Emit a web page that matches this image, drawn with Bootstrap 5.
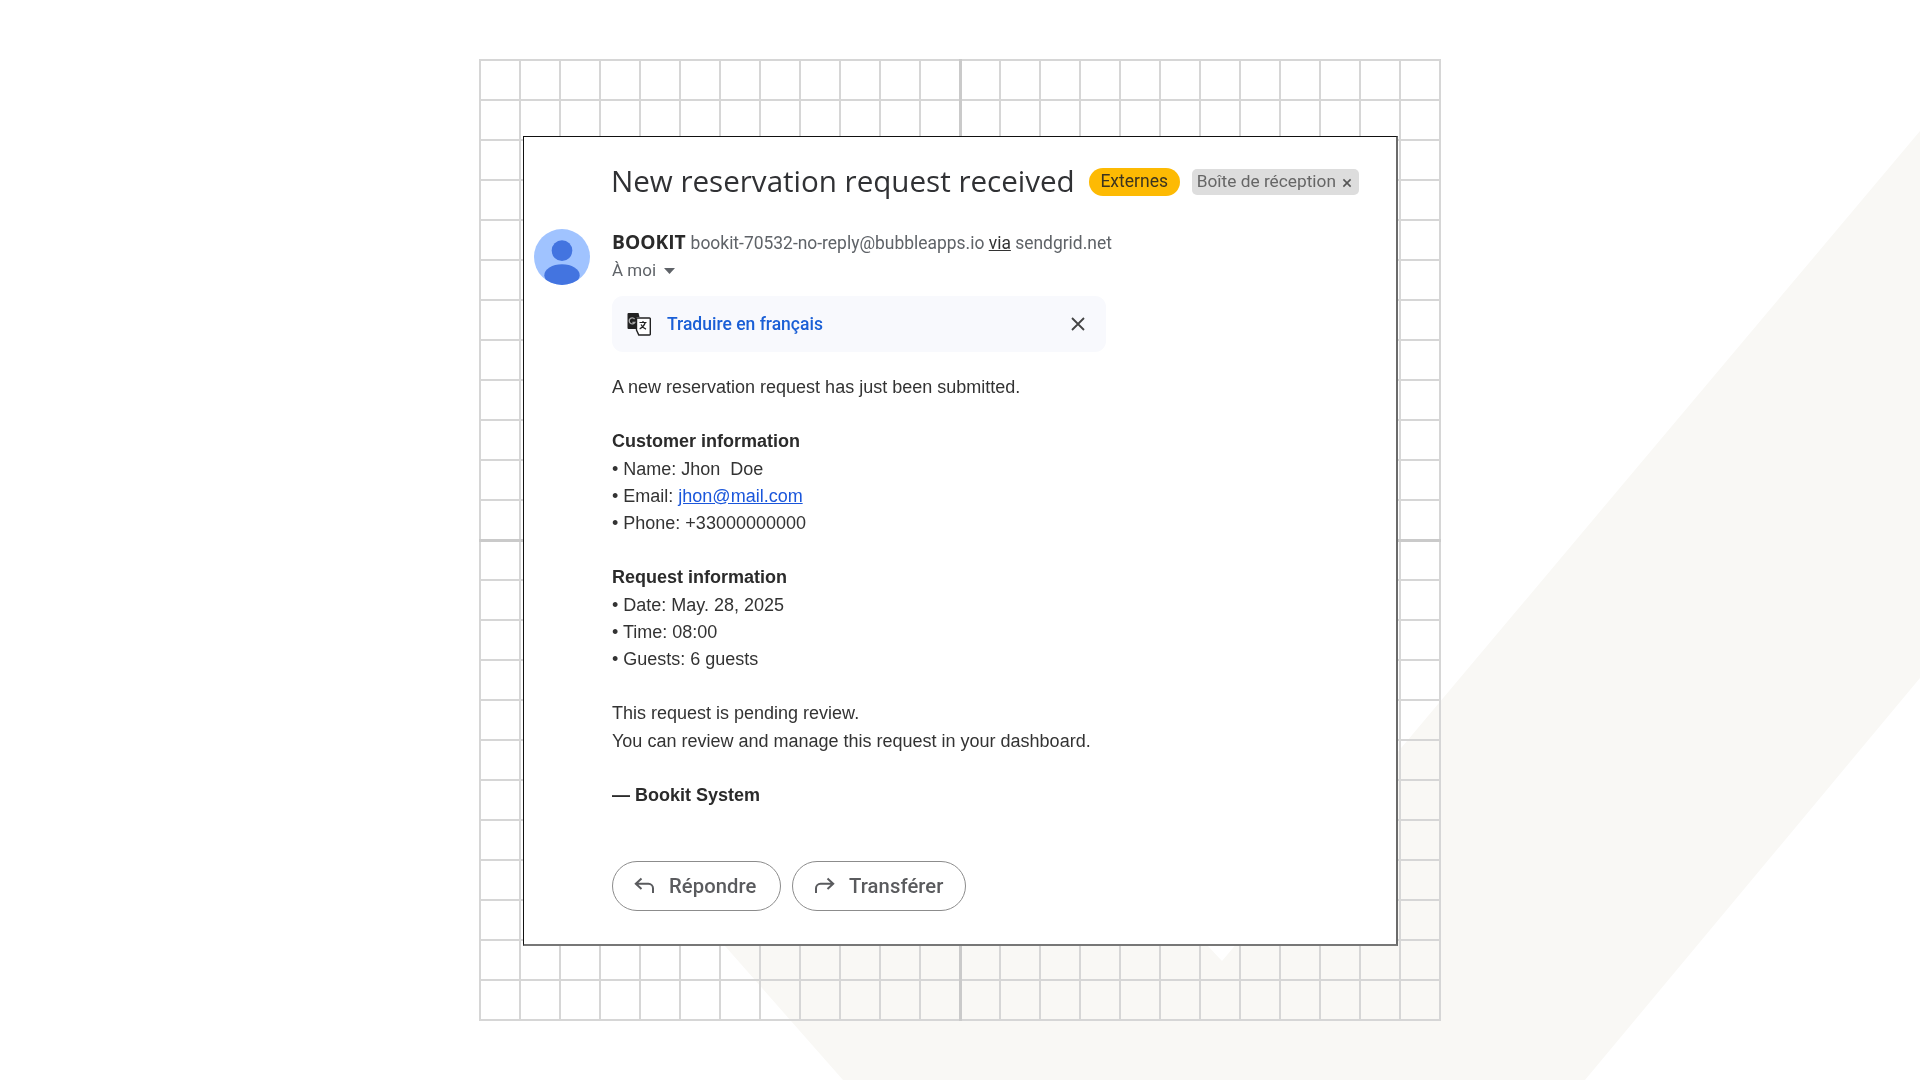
<!DOCTYPE html>
<html lang="fr"><head><meta charset="utf-8"><title>Reservation</title>
<link href="https://cdn.jsdelivr.net/npm/bootstrap@5.3.0/dist/css/bootstrap.min.css" rel="stylesheet">
<style>
html,body{height:100%}
body{background:#fff;font-family:Roboto,"Liberation Sans",sans-serif;color:#222;overflow:hidden;position:relative}
.bgband{position:absolute;left:0;top:0;width:1920px;height:1080px}
.stage{position:relative;width:962px;height:962px;margin:59px 0 0 479px;padding:77px 0 0 44px;
 background-image:
 linear-gradient(#cacaca,#cacaca),linear-gradient(#cacaca,#cacaca),
 linear-gradient(to right,#d6d6d6 2px,transparent 2px),linear-gradient(to bottom,#d6d6d6 2px,transparent 2px),
 linear-gradient(to right,#d6d6d6 2px,transparent 2px),linear-gradient(to bottom,#d6d6d6 2px,transparent 2px);
 background-size:3px 100%,100% 3px,40px 100%,100% 40px,100% 100%,100% 100%;
 background-position:479.500px 0,0 479.500px,0 0,0 0,960px 0,0 960px;
 background-repeat:no-repeat,no-repeat,repeat-x,repeat-y,no-repeat,no-repeat}
.mailbox{width:875px;height:810px;background:#fff;border:1px solid #111;border-right:2px solid #6b6b6b;border-bottom:2px solid #777;padding-top:28px;filter:blur(.3px)}
.subject-row{margin-left:87px;height:32px}
.subject{font-family:"Open Sans",Roboto,sans-serif;font-size:29.6px;font-weight:400;color:#303134;margin:0 14px 0 0;line-height:32px;white-space:nowrap;letter-spacing:-.02px}
.tag-ext{background:#fdba03;color:#3a3320;font-size:17.5px;font-weight:400;height:28px;padding:0 11px;width:91px;border-radius:14px;margin-top:2px}
.tag-box{background:#dddddd;color:#666;font-size:17.3px;font-weight:400;height:26px;width:167px;margin-left:12px;border-radius:5px;padding:0 0 0 5px;margin-top:2px}
.tag-x{font-size:19px;line-height:1;margin-left:6px;color:#555}
.sender-wrap{margin-top:32px;margin-left:10px}
.avatar-disc{width:56px;height:56px;flex:none;margin-right:22px}
.sender-col{padding-top:1px}
.line-h{height:27px;line-height:27px;white-space:nowrap}
.sender-name{font-family:"Open Sans",Roboto,sans-serif;font-size:19.2px;font-weight:700;color:#2a2a2a;line-height:1}
.sender-addr{font-size:17.45px;color:#5f6368;margin-left:1px}
.sender-addr u{color:#333}
.to-me{font-size:17px;color:#5f6368}
.trans-bar{width:494px;height:56px;background:#f8f9fd;border-radius:11px;margin-top:12px;padding:0 21px 0 15px}
.trans-link{font-size:17.5px;font-weight:500;color:#1a5fd6;text-decoration:none;margin-left:16px}
.mailtext{font-family:"Liberation Sans",Arial,sans-serif;font-size:18px;line-height:27.2px;color:#333;margin-top:22px}
.mailtext p{margin:0 0 27.200px;white-space:pre}
.mailtext p:last-child{margin-bottom:0}
.mailtext span{display:block}
.mailtext b{font-weight:700;color:#2b2b2b}
.mailtext a{color:#1a56db}
.act-row{margin-top:51.500px;gap:11px}
.act-btn{height:50px;border:1.5px solid #8c8c8c;border-radius:25px;color:#5a5b5e;font-size:20.2px;font-weight:500;display:flex;align-items:center;background:#fff;padding:0;letter-spacing:.1px}
.act-a{width:169px;padding-left:21px}
.act-b{width:174px;padding-left:21px}
.act-btn svg{margin-right:14px;flex:none}
</style></head>
<body>
<svg class="bgband" viewBox="0 0 1920 1080" aria-hidden="true"><polygon fill="#f9f8f5" points="1920,131 1222,961 1160,895 680,895 843,1080 1585,1080 1920,678"/></svg>
<div class="stage">
 <div class="mailbox">
  <div class="subject-row d-flex align-items-center">
   <h1 class="subject">New reservation request received</h1>
   <span class="badge tag-ext d-inline-flex align-items-center justify-content-center">Externes</span>
   <span class="badge tag-box d-inline-flex align-items-center">Boîte de réception<span class="tag-x">×</span></span>
  </div>
  <div class="sender-wrap d-flex">
   <svg class="avatar-disc" viewBox="0 0 57 57"><defs><clipPath id="cc"><circle cx="28.5" cy="28.5" r="28.5"/></clipPath></defs><circle cx="28.5" cy="28.5" r="28.5" fill="#a0c3ff"/><g clip-path="url(#cc)" fill="#4374e0"><circle cx="28.5" cy="22" r="10.5"/><ellipse cx="28.5" cy="47" rx="18" ry="11"/></g></svg>
   <div class="sender-col">
    <div class="line-h"><span class="sender-name">BOOKIT</span> <span class="sender-addr">bookit-70532-no-reply@bubbleapps.io <u>via</u> sendgrid.net</span></div>
    <div class="line-h to-me d-flex align-items-center">À moi<svg class="ms-2" width="11" height="6" viewBox="0 0 11 6"><path d="M0 0h11L5.5 6z" fill="#5f6368"/></svg></div>
    <div class="trans-bar d-flex align-items-center">
     <svg width="24" height="24" viewBox="0 0 24 24"><path d="M1.5 1h10l1 4h-3v12H1.5a1 1 0 0 1-1-1V2a1 1 0 0 1 1-1z" fill="#222"/><path d="M9.5 6h13a.8.8 0 0 1 .8.8v15.4a.8.8 0 0 1-.8.8H11.800l-2.300-5z" fill="#fff" stroke="#222" stroke-width="1.4"/><path d="M7.6 7a3 3 0 1 0 .2 3.400H5.400" fill="none" stroke="#aaa" stroke-width="1.3"/><path d="M12.500 10.500h7M16 9v1.500M18.300 10.500c-1 3-3 5.200-5.600 6.400M14 12.500c1 2 2.600 3.600 5 4.600" fill="none" stroke="#222" stroke-width="1.2"/></svg>
     <a href="#" class="trans-link">Traduire en français</a>
     <svg class="ms-auto" width="14" height="14" viewBox="0 0 14 14"><path d="M1 1l12 12M13 1L1 13" stroke="#444" stroke-width="1.800" fill="none"/></svg>
    </div>
    <div class="mailtext">
     <p>A new reservation request has just been submitted.</p>
     <p><b>Customer information</b><span>• Name: Jhon  Doe</span><span>• Email: <a href="#">jhon@mail.com</a></span><span>• Phone: +33000000000</span></p>
     <p><b>Request information</b><span>• Date: May. 28, 2025</span><span>• Time: 08:00</span><span>• Guests: 6 guests</span></p>
     <p><span>This request is pending review.</span><span>You can review and manage this request in your dashboard.</span></p>
     <p><b>— Bookit System</b></p>
    </div>
    <div class="act-row d-flex">
     <button type="button" class="btn act-btn act-a"><svg width="21" height="17" viewBox="0 0 21 17"><path d="M7.500 1.500L1.800 6.800l5.700 5.300M2 6.800h12.500a4.500 4.500 0 0 1 4.500 4.500v4.700" fill="none" stroke="#5a5b5e" stroke-width="2"/></svg>Répondre</button>
     <button type="button" class="btn act-btn act-b"><svg width="21" height="17" viewBox="0 0 21 17"><path d="M13.500 1.500l5.700 5.300-5.700 5.300M19 6.800H6.500A4.500 4.500 0 0 0 2 11.300v4.700" fill="none" stroke="#5a5b5e" stroke-width="2"/></svg>Transférer</button>
    </div>
   </div>
  </div>
 </div>
</div>
<script src="https://cdn.jsdelivr.net/npm/bootstrap@5.3.0/dist/js/bootstrap.bundle.min.js"></script>
</body></html>
